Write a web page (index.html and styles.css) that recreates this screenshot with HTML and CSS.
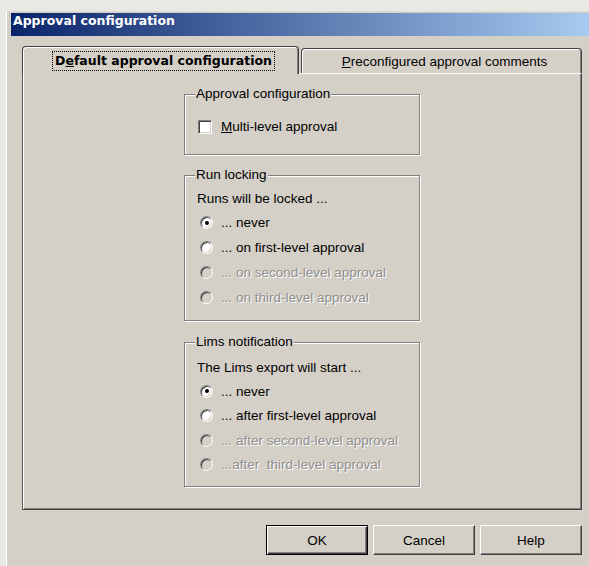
FILE: index.html
```html
<!DOCTYPE html>
<html lang="en">
<head>
<meta charset="utf-8">
<title>Approval configuration</title>
<link rel="stylesheet" href="styles.css">
</head>
<body>
<div class="window">
  <div class="titlebar">Approval configuration</div>
  <div class="dialog">
    <div class="tabs">
      <div class="tab tab-active"><span class="focus">D<u>e</u>fault approval configuration</span></div>
      <div class="tab tab-other"><span><u>P</u>reconfigured approval comments</span></div>
    </div>
    <div class="panel">
      <div class="group group-approval">
        <span class="group-label">Approval configuration</span>
        <div class="option option-check"><span class="checkbox"></span><span><u>M</u>ulti-level approval</span></div>
      </div>

      <div class="group group-runs">
        <span class="group-label">Run locking</span>
        <div class="intro">Runs will be locked ...</div>
        <div class="option"><span class="radio radio-on"></span><span>... never</span></div>
        <div class="option"><span class="radio"></span><span>... on first-level approval</span></div>
        <div class="option disabled"><span class="radio"></span><span>... on second-level approval</span></div>
        <div class="option disabled"><span class="radio"></span><span>... on third-level approval</span></div>
      </div>

      <div class="group group-lims">
        <span class="group-label">Lims notification</span>
        <div class="intro">The Lims export will start ...</div>
        <div class="option"><span class="radio radio-on"></span><span>... never</span></div>
        <div class="option"><span class="radio"></span><span>... after first-level approval</span></div>
        <div class="option disabled"><span class="radio"></span><span>... after second-level approval</span></div>
        <div class="option disabled"><span class="radio"></span><span>...after&nbsp; third-level approval</span></div>
      </div>
    </div>
    <div class="buttons">
      <button class="btn btn-default" type="button">OK</button>
      <button class="btn" type="button">Cancel</button>
      <button class="btn" type="button">Help</button>
    </div>
  </div>
</div>
</body>
</html>
```

FILE: styles.css
```css
html, body {
  margin: 0;
  height: 100%;
}

body {
  background: #e9e8e5;
  font-family: "Liberation Sans", Arial, sans-serif;
  font-size: 13.5px;
  color: #000;
  overflow: hidden;
}

/* dialog window frame */
.window {
  box-sizing: border-box;
  height: calc(100% - 11px);
  margin: 11px 0 0 6px;
  padding: 1px 0 0 4px;
  border-left: 1px solid #fff;
  border-top: 1px solid #dedcd7;
  background: #d4d0c8;
}

.titlebar {
  height: 23px;
  line-height: 23px;
  padding-left: 2px;
  background: linear-gradient(to right, #0a246a, #a6caf0);
  color: #fff;
  font: bold 12.5px "DejaVu Sans", Verdana, sans-serif;
  white-space: nowrap;
}

.dialog {
  padding: 10px 7px 0 11px;
}

/* tab strip */
.tabs {
  display: flex;
  align-items: flex-end;
  height: 27px;
}

.tab {
  box-sizing: border-box;
  display: flex;
  align-items: center;
  justify-content: center;
  padding-left: 6px;
  background: #d4d0c8;
  border: 1px solid #404040;
  border-bottom: none;
  border-radius: 4px 4px 0 0;
  box-shadow: inset 1px 1px 0 #fff, inset -1px 0 0 #808080;
  white-space: nowrap;
}

.tab-active {
  position: relative;
  z-index: 1;
  width: 277px;
  height: 28px;
  margin-bottom: -1px;
  padding-top: 1px;
  font: bold 12.5px "DejaVu Sans", Verdana, sans-serif;
}

.focus {
  outline: 1px dotted #000;
  padding: 1px 2px 2px;
}

.tab-other {
  flex: 1;
  height: 25px;
  margin-left: 2px;
}

/* tab page */
.panel {
  box-sizing: border-box;
  height: 437px;
  display: flex;
  flex-direction: column;
  align-items: center;
  padding-top: 20px;
  border: 1px solid;
  border-color: #fff #404040 #404040 #5a5a5a;
  box-shadow: inset 1px 0 0 #fff, inset -1px -1px 0 #808080;
}

/* etched group boxes */
.group {
  position: relative;
  box-sizing: border-box;
  width: 236px;
  padding-left: 12px;
  border: 1px solid #808080;
  box-shadow: inset 1px 1px 0 #fff, 1px 1px 0 #fff;
}

.group-label {
  position: absolute;
  top: -9px;
  left: 10px;
  padding: 0 1px;
  line-height: 16px;
  background: #d4d0c8;
  white-space: nowrap;
}

.group-approval {
  padding-top: 19px;
  padding-bottom: 15px;
}

.group-runs {
  margin-top: 20px;
  padding-top: 12px;
  padding-bottom: 10px;
}

.group-lims {
  margin-top: 21px;
  padding-top: 14px;
  padding-bottom: 9px;
}

.intro {
  line-height: 22px;
  white-space: nowrap;
}

.option {
  display: flex;
  align-items: center;
  gap: 8px;
  height: 25px;
  padding-left: 3px;
  white-space: nowrap;
}

.group-lims .option {
  height: 24.5px;
}

.option-check {
  padding-left: 1px;
  gap: 9px;
}

.disabled {
  color: #8e8e8e;
  text-shadow: 1px 1px 0 #fff;
}

/* sunken check box */
.checkbox {
  flex: none;
  box-sizing: border-box;
  width: 14px;
  height: 14px;
  background: #fff;
  border: 1px solid;
  border-color: #808080 #fff #fff #808080;
  box-shadow: inset 1px 1px 0 #404040, inset -1px -1px 0 #d4d0c8;
}

/* sunken radio button */
.radio {
  position: relative;
  flex: none;
  box-sizing: border-box;
  width: 13px;
  height: 13px;
  border-radius: 50%;
  background: #fff;
  border: 1px solid;
  border-color: #808080 #fff #fff #808080;
  box-shadow: inset 1px 1px 0 #404040, inset -1px -1px 0 #d4d0c8;
}

.disabled .radio {
  background: #d4d0c8;
}

.radio-on::after {
  content: "";
  position: absolute;
  left: 50%;
  top: 50%;
  width: 4px;
  height: 4px;
  margin: -2px 0 0 -2px;
  border-radius: 50%;
  background: #000;
}

/* command buttons */
.buttons {
  display: flex;
  justify-content: flex-end;
  gap: 5px;
  margin-top: 15px;
}

.btn {
  box-sizing: border-box;
  width: 102px;
  height: 30px;
  padding: 0;
  background: #d4d0c8;
  font: 13.5px "Liberation Sans", Arial, sans-serif;
  color: #000;
  border: 1px solid;
  border-color: #fff #404040 #404040 #fff;
  border-radius: 0;
  box-shadow: inset -1px -1px 0 #808080;
}

.btn-default {
  border: 1px solid #000;
  box-shadow: inset 1px 1px 0 #fff, inset -1px -1px 0 #404040, inset -2px -2px 0 #808080;
}
```
